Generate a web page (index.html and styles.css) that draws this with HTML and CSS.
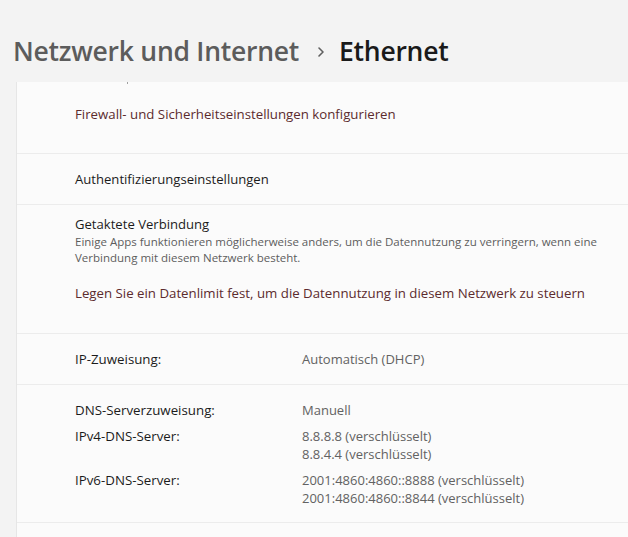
FILE: index.html
```html
<!DOCTYPE html>
<html lang="de">
<head>
    <meta charset="UTF-8">
    <meta name="viewport" content="width=device-width, initial-scale=1.0">
    <title>Ethernet</title>
    <link rel="stylesheet" href="styles.css">
</head>
<body>
    <header class="page-header">
        <h1 class="breadcrumb">
            <span class="crumb-parent">Netzwerk und Internet</span>
            <svg class="crumb-sep" width="10" height="12" viewBox="0 0 10 12">
                <path d="M3 2 L7 6 L3 10" fill="none" stroke="#5f5f5f" stroke-width="1.6" stroke-linecap="round" stroke-linejoin="round"/>
            </svg>
            <span class="crumb-current">Ethernet</span>
        </h1>
    </header>

    <div class="card">
        <div class="row row-firewall">
            <span class="scroll-mark"></span>
            <a class="link" href="#">Firewall- und Sicherheitseinstellungen konfigurieren</a>
        </div>

        <div class="row row-simple">
            <span class="row-title">Authentifizierungseinstellungen</span>
        </div>

        <div class="row row-metered">
            <div class="row-title">Getaktete Verbindung</div>
            <div class="row-desc">Einige Apps funktionieren möglicherweise anders, um die Datennutzung zu verringern, wenn eine Verbindung mit diesem Netzwerk besteht.</div>
            <a class="link" href="#">Legen Sie ein Datenlimit fest, um die Datennutzung in diesem Netzwerk zu steuern</a>
        </div>

        <div class="row row-simple">
            <div class="props">
                <span class="prop-label">IP-Zuweisung:</span>
                <span class="prop-value">Automatisch (DHCP)</span>
            </div>
        </div>

        <div class="row row-dns">
            <div class="props">
                <span class="prop-label">DNS-Serverzuweisung:</span>
                <span class="prop-value">Manuell</span>

                <span class="prop-label">IPv4-DNS-Server:</span>
                <span class="prop-value">8.8.8.8 (verschlüsselt)<br>8.8.4.4 (verschlüsselt)</span>

                <span class="prop-label">IPv6-DNS-Server:</span>
                <span class="prop-value">2001:4860:4860::8888 (verschlüsselt)<br>2001:4860:4860::8844 (verschlüsselt)</span>
            </div>
        </div>

        <div class="row row-last"></div>
    </div>
</body>
</html>
```

FILE: styles.css
```css
body {
    margin: 0;
    padding: 0;
    background: #f3f3f3;
    font-family: "Open Sans", "Noto Sans", sans-serif;
    color: #1b1b1b;
    overflow: hidden;
}

.page-header {
    padding: 33px 0 0 13px;
    height: 82px;
    box-sizing: border-box;
}

.breadcrumb {
    margin: 0;
    display: flex;
    align-items: center;
    font-size: 26.5px;
    font-weight: 600;
    line-height: 36px;
    letter-spacing: -0.25px;
}

.crumb-parent {
    color: #5c5c5c;
}

.crumb-sep {
    margin: 2px 13px 0 17px;
}

.crumb-current {
    color: #1a1a1a;
}

.card {
    margin: 0 -20px 0 16px;
    background: #fbfbfb;
    border-left: 1px solid #e6e6e6;
}

.row {
    padding-left: 58px;
    border-bottom: 1px solid #ececec;
    box-sizing: border-box;
}

.row-firewall {
    position: relative;
    height: 72px;
    padding-top: 20px;
}

.scroll-mark {
    position: absolute;
    left: 110px;
    top: 0;
    width: 1px;
    height: 2px;
    background: #a0a0a0;
}

.row-simple {
    height: 51px;
    display: flex;
    align-items: center;
}

.row-title {
    font-size: 13.1px;
    line-height: 20px;
}

.row-desc {
    font-size: 11.5px;
    line-height: 16px;
    color: #5d5d5d;
    width: 560px;
}

.row-metered {
    height: 129px;
    padding-top: 9px;
}

.row-metered .link {
    display: block;
    margin-top: 17px;
}

.link {
    color: #5c2b2e;
    text-decoration: none;
    font-size: 13.25px;
    line-height: 20px;
}

.props {
    display: grid;
    grid-template-columns: 227px auto;
    row-gap: 8px;
    line-height: 18px;
}

.prop-label {
    color: #1b1b1b;
    font-size: 13.3px;
}

.prop-value {
    color: #626262;
    font-size: 13px;
}

.row-dns {
    height: 138px;
    padding-top: 16px;
}

.row-last {
    height: 60px;
    border-bottom: none;
}
```
